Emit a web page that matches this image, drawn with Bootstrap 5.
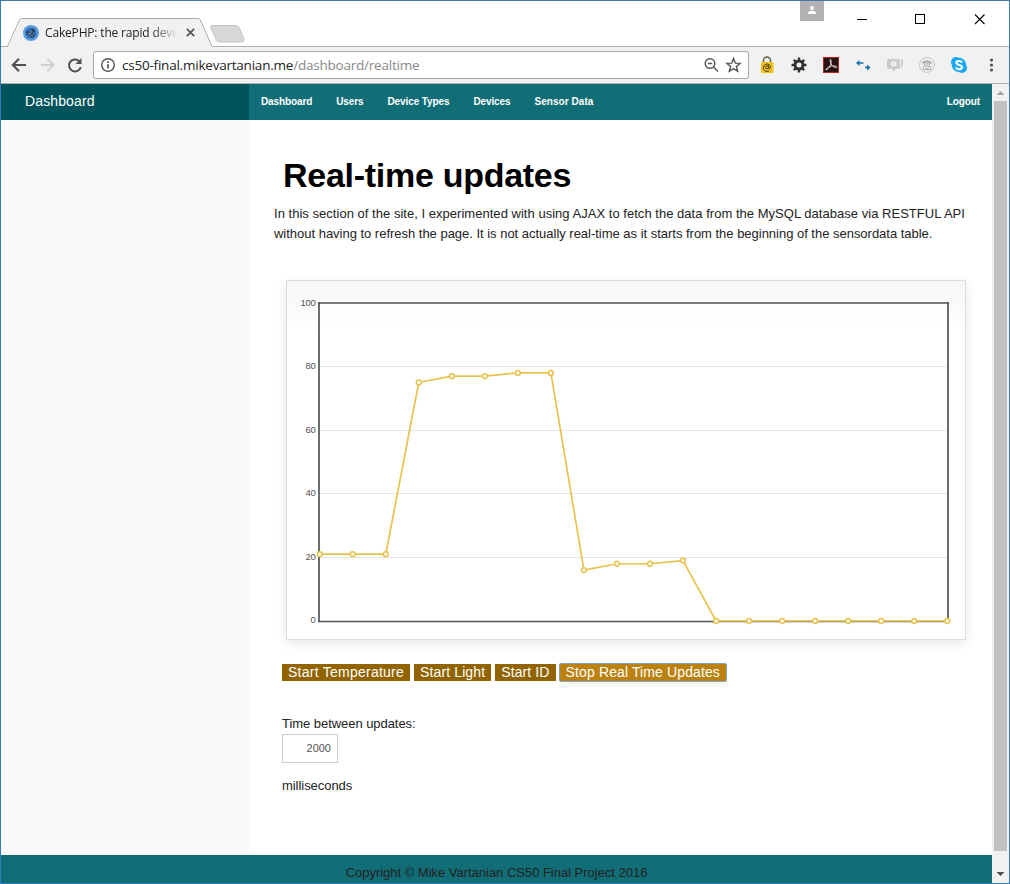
<!DOCTYPE html>
<html lang="en">
<head>
<meta charset="utf-8">
<title>CakePHP: the rapid development php framework</title>
<meta name="viewport" content="width=device-width, initial-scale=1">
<link rel="stylesheet" href="https://cdn.jsdelivr.net/npm/bootstrap@5.3.0/dist/css/bootstrap.min.css">
<style>
  html, body { height: 100%; overflow: hidden; }
  body { font-family: "Liberation Sans", Arial, sans-serif; font-size: 13px; color: #222; background: #fff; }
  svg { display: block; flex: none; }
  .app-window { width: 1010px; height: 884px; border: 1px solid #2f7cb8; border-top-color: #4277a8; }
  .tab-strip { height: 46px; border-bottom: 1px solid #b2b2b2; }
  .browser-tab { width: 206px; height: 29px; margin-left: 5px; top: 17px; padding-left: 17px; font: 12px "Open Sans", sans-serif; color: #222; }
  .tab-shape { left: 0; top: 0; }
  .tab-title { width: 133px; margin-left: 6px; letter-spacing: -.17px; line-height: 18px; -webkit-mask-image: linear-gradient(90deg, #000 80%, transparent); mask-image: linear-gradient(90deg, #000 80%, transparent); }
  .new-tab { margin-top: 23px; margin-left: -3px; }
  .user-chip { width: 24px; height: 20px; background: #b2b2b2; }
  .tool-bar { height: 37px; background: #f1f1f1; border-bottom: 1px solid #b0b2b0; padding-left: 8px; }
  .omnibox { width: 656px; height: 28px; border: 1px solid #a9a9a9; border-radius: 3px; background: #fff; margin-left: 8px; padding: 0 6px; }
  .url-text { font: 13.5px/26px "Open Sans", sans-serif; color: #222; margin-left: 6px; letter-spacing: -.22px; }
  .url-text span { color: #888; }
  .page-view { width: 991px; }
  .top-nav { height: 36px; background: #116d76; }
  .brand-cell { width: 248px; background: #01545b; color: #fff; font-size: 14px; padding-left: 24px; line-height: 34px; letter-spacing: .12px; }
  .top-nav .nav-link { color: #fff; font-weight: 700; font-size: 10px; padding: 0 12px; line-height: 35px; letter-spacing: -.11px; }
  .top-nav .nav-link.fit-wide { letter-spacing: .06px; }
  .side-col { width: 248px; background: #fafafa; }
  .main-col { padding: 34px 25px 0; }
  .main-col h2 { font-size: 34px; font-weight: 700; color: #000; line-height: 43px; margin: 0 0 7px 9px; letter-spacing: -.28px; }
  .intro { line-height: 20px; margin-bottom: 36px; white-space: nowrap; }
  .line-a { letter-spacing: .028px; }
  .line-b { letter-spacing: -.017px; }
  .chart-box { width: 680px; height: 360px; margin-left: 12px; border: 1px solid #ddd; background: linear-gradient(#f6f6f6 0, #fff 50px); box-shadow: 0 3px 10px rgba(0,0,0,.1); }
  .chart-box text { font-size: 9.5px; letter-spacing: -.3px; fill: #545454; text-anchor: end; }
  .btn-row { margin: 24px 0 0 8px; gap: 4px; }
  .btn-row .btn { background: #926400; color: #fff; border: 0; border-radius: 0; font-size: 14px; line-height: 17px; height: 17px; padding: 0 6px; white-space: nowrap; letter-spacing: .12px; }
  .btn-row .btn:first-child { letter-spacing: .25px; }
  .btn-row .btn.is-focused { background: #bc8210; box-shadow: 0 0 0 1px #7ba3cf; border-radius: 1px; }
  .update-form { margin: 33px 0 0 8px; letter-spacing: -.05px; }
  .update-form .form-control { width: 56px; height: 29px; border: 1px solid #ccc; border-radius: 0; font-size: 11px; color: #555; padding: 0 6px; text-align: right; }
  .unit-text { margin-top: 13px; }
  .page-foot { height: 28px; background: #116d76; line-height: 36px; overflow: hidden; letter-spacing: -.02px; }
  .scroll-rail { width: 17px; background: #f1f1f1; }
  .scroll-thumb { width: 13px; height: 750px; background: #c1c1c1; margin-top: 17px; }
</style>
</head>
<body>
<div class="app-window d-flex flex-column overflow-hidden">

  <div class="tab-strip d-flex flex-shrink-0">
    <div class="browser-tab position-relative d-flex align-items-center">
      <svg class="tab-shape position-absolute" width="207" height="30"><path d="M0 28.500L3 28.500L14 3Q15 .5 17 .5H191Q193 .5 194 3L206 28.500H207V30H0Z" fill="#f1f1f1"/><path d="M0 28.500H1.500L13.500 2Q14.500 .5 16 .5H192Q193.500 .5 194.300 2L206 28.500" fill="none" stroke="#aaa"/></svg>
      <svg class="position-relative" width="16" height="16"><circle cx="8" cy="8" r="8" fill="#5a9ae2"/><circle cx="8" cy="8" r="5.500" fill="#376cab"/><path d="M3 6l4 1 3-4 2 3-3 2 3 3-4 2-1-4-3 1z" fill="#263f5d"/><path d="M5 8l2 1 2-3M8 10l2 1" stroke="#7fa8d4" fill="none"/></svg>
      <div class="tab-title position-relative text-nowrap overflow-hidden">CakePHP: the rapid devel</div>
      <svg class="position-relative ms-2" width="9" height="9"><path d="M.8.8l7.400 7.400M8.200.8L.8 8.200" stroke="#555" stroke-width="1.700"/></svg>
    </div>
    <svg class="new-tab" width="38" height="20"><path d="M3 1.500H27Q29.500 1.500 30.500 4L35 15.500Q35.500 18 33.500 18H11Q8 18 7 15.500L2 4Q1 1.500 3 1.500Z" fill="#d8d8d8" stroke="#c6c6c6"/></svg>
    <div class="d-flex ms-auto">
      <div class="user-chip d-flex justify-content-center"><svg width="8" height="14"><circle cx="4" cy="7" r="2" fill="#fff"/><path d="M0 13V11.500Q1 9.700 4 9.700T8 11.500V13Z" fill="#fff"/></svg></div>
      <svg width="185" height="36"><path d="M33 18.500H43" stroke="#000" fill="none"/><rect x="91.500" y="13.500" width="9" height="9" fill="none" stroke="#000"/><path d="M151 13.500l9.500 9.500M160.500 13.500L151 23" stroke="#000" stroke-width="1.100"/></svg>
    </div>
  </div>

  <div class="tool-bar d-flex align-items-center flex-shrink-0">
    <svg width="76" height="20" fill="none" stroke-width="2"><path d="M17 10H4M10 3.700L3.700 10L10 16.300" stroke="#505050"/><path d="M32 10H44M38.500 4L44.500 10L38.500 16" stroke="#cfcfcf"/><path d="M70 5.900A6 6 0 1 0 71.800 12" stroke="#505050"/><path d="M72.500 3V9H66.500Z" fill="#505050"/></svg>
    <div class="omnibox d-flex align-items-center">
      <svg width="16" height="16"><circle cx="8" cy="8" r="6.300" fill="none" stroke="#555" stroke-width="1.400"/><path d="M8 7.200V11.500M8 4.300V6" stroke="#555" stroke-width="1.700"/></svg>
      <div class="url-text">cs50-final.mikevartanian.me<span>/dashboard/realtime</span></div>
      <svg class="ms-auto" width="38" height="18" fill="none" stroke="#555" stroke-width="1.400"><circle cx="6" cy="7.500" r="4.800"/><path d="M3.800 7.500H8.200M9.500 11L14 15.500"/><path d="M29.500 2.500L31.300 7.100L36.200 7.400L32.400 10.500L33.700 15.300L29.500 12.600L25.300 15.300L26.600 10.500L22.800 7.400L27.700 7.100Z"/></svg>
    </div>
    <svg width="256" height="24">
      <path d="M14.500 10V7.500a3.500 3.500 0 0 1 7 0V10" fill="none" stroke="#606050" stroke-width="1.500"/><rect x="12" y="9" width="12.500" height="11" rx="1.500" fill="#f0c21a"/><g fill="none" stroke="#493b12"><circle cx="18" cy="14.300" r="1.500"/><path d="M19.700 12.300V15.300Q20.700 16.500 21.700 14.300A3.700 3.700 0 1 0 20.500 17.500"/></g>
      <g transform="translate(50 12)"><circle r="4" fill="none" stroke="#333" stroke-width="3"/><path d="M0-7.500V-4M0 4V7.500M-7.500 0H-4M4 0H7.500M-5.200-5.200L-3-3M3 3L5.200 5.200M-5.200 5.200L-3 3M3-3L5.200-5.200" stroke="#333" stroke-width="2.400"/></g>
      <rect x="74.500" y="4.500" width="15" height="15" fill="#2b1012" stroke="#b5281f"/><path d="M77 17C80 16 83 10 82 7C81.500 5.500 80.500 7 81.500 9.500C83 13 85 15 87.500 14.500C89 13.500 85 12 81.500 13.500C79 14.500 76.500 15.800 77 17Z" fill="none" stroke="#eee" stroke-width=".9"/>
      <path d="M109 10H114.500M116 14.500H119.500" stroke="#176fae" stroke-width="1.600"/><path d="M107 10L110.500 7V13ZM121.500 14.500L118 11.500V17.500Z" fill="#176fae"/>
      <path d="M138 7Q138 6 139 6H150Q151 6 151 7V15Q151 16 150 16H147L144 19V16H139Q138 16 138 15Z" fill="#cbcbcb"/><path d="M152.500 6.500V14.500M153.500 6V13" stroke="#ccc"/><circle cx="144.500" cy="11" r="1.800" fill="none" stroke="#fff" stroke-width="1.300"/><path d="M146.800 9V13" stroke="#fff"/>
      <circle cx="178" cy="12" r="7.500" fill="#ededed" stroke="#c9c9c9"/><path d="M173 10Q174 7.500 178 7.500T183 10L181 11L179.500 9.500H176.500L175 11Z" fill="#aaa"/><path d="M176 11H180L182 16.500H174Z" fill="#fff" stroke="#aaa"/><circle cx="178" cy="14" r="1.500" fill="none" stroke="#aaa"/>
      <circle cx="207" cy="9" r="5" fill="#18aaf0"/><circle cx="213" cy="15" r="5" fill="#18aaf0"/><circle cx="210" cy="12" r="7.200" fill="#18aaf0"/><path d="M213 9.500C212 7.400 207.300 7.300 207.300 9.800C207.300 12.500 213 11.200 213 14.200C213 16.800 207.800 16.800 207 14.300" fill="none" stroke="#fff" stroke-width="2"/>
      <g fill="#505050"><circle cx="242.500" cy="7" r="1.600"/><circle cx="242.500" cy="12" r="1.600"/><circle cx="242.500" cy="17" r="1.600"/></g>
    </svg>
  </div>

  <div class="d-flex flex-grow-1 overflow-hidden">
    <div class="page-view d-flex flex-column">
      <nav class="top-nav d-flex flex-shrink-0">
        <div class="brand-cell">Dashboard</div>
        <div class="nav flex-nowrap">
          <a class="nav-link" href="#">Dashboard</a>
          <a class="nav-link" href="#">Users</a>
          <a class="nav-link" href="#">Device Types</a>
          <a class="nav-link" href="#">Devices</a>
          <a class="nav-link fit-wide" href="#">Sensor Data</a>
        </div>
        <a class="nav-link ms-auto" href="#">Logout</a>
      </nav>
      <div class="d-flex flex-grow-1 overflow-hidden">
        <aside class="side-col flex-shrink-0"></aside>
        <main class="main-col flex-grow-1">
          <h2>Real-time updates</h2>
          <p class="intro"><span class="line-a">In this section of the site, I experimented with using AJAX to fetch the data from the MySQL database via RESTFUL API</span><br><span class="line-b">without having to refresh the page. It is not actually real-time as it starts from the beginning of the sensordata table.</span></p>
          <div class="chart-box">
            <svg id="chart" width="678" height="358">
              <rect x="32" y="22" width="629" height="319" fill="#fff" fill-opacity=".5"/>
              <g id="ticks"></g>
              <path d="M32 21V341M31 22H662M661 21V341M31 340.500H662" stroke="#545454" stroke-width="1.700" fill="none"/>
              <polyline id="trace" fill="none" stroke="#e8c24c" stroke-width="1.700" stroke-linejoin="round"/>
              <g id="dots" fill="#fff" stroke="#e8c24c" stroke-width="1.500"></g>
            </svg>
          </div>
          <div class="btn-row d-flex">
            <button class="btn">Start Temperature</button>
            <button class="btn">Start Light</button>
            <button class="btn">Start ID</button>
            <button class="btn is-focused">Stop Real Time Updates</button>
          </div>
          <div class="update-form">
            <label class="d-block" for="interval">Time between updates:</label>
            <input class="form-control" id="interval" value="2000">
            <div class="unit-text">milliseconds</div>
          </div>
        </main>
      </div>
      <footer class="page-foot text-center flex-shrink-0">Copyright © Mike Vartanian CS50 Final Project 2016</footer>
    </div>
    <div class="scroll-rail position-relative d-flex flex-column align-items-center">
      <svg class="position-absolute top-0" width="17" height="17"><path d="M4.500 11L8.500 7L12.500 11Z" fill="#a3a3a3"/></svg>
      <div class="scroll-thumb flex-shrink-0"></div>
      <svg class="mt-auto" width="17" height="17"><path d="M4.500 6L8.500 10L12.500 6Z" fill="#505050"/></svg>
    </div>
  </div>
</div>
<script src="https://cdn.jsdelivr.net/npm/bootstrap@5.3.0/dist/js/bootstrap.bundle.min.js"></script>
<script>
  const readings = [21,21,21,75,77,77,78,78,16,18,18,19,0,0,0,0,0,0,0,0];
  const points = readings.map((v, i) => [32.7 + i * 33.03, 340 - v * 3.18]);
  document.getElementById('trace').setAttribute('points', points.map(p => p.join(',')).join(' '));
  document.getElementById('dots').innerHTML = points.map(p => `<circle cx="${p[0]}" cy="${p[1]}" r="2.4"/>`).join('');
  document.getElementById('ticks').innerHTML = [0,20,40,60,80,100].map(v => {
    const y = Math.round(339.3 - v * 3.175);
    return (v % 100 ? `<path d="M33 ${y + .5}H660" stroke="#e5e5e5" stroke-width="1.2"/>` : '') + `<text x="28.500" y="${y + 2.5}">${v}</text>`;
  }).join('');
</script>
</body>
</html>
